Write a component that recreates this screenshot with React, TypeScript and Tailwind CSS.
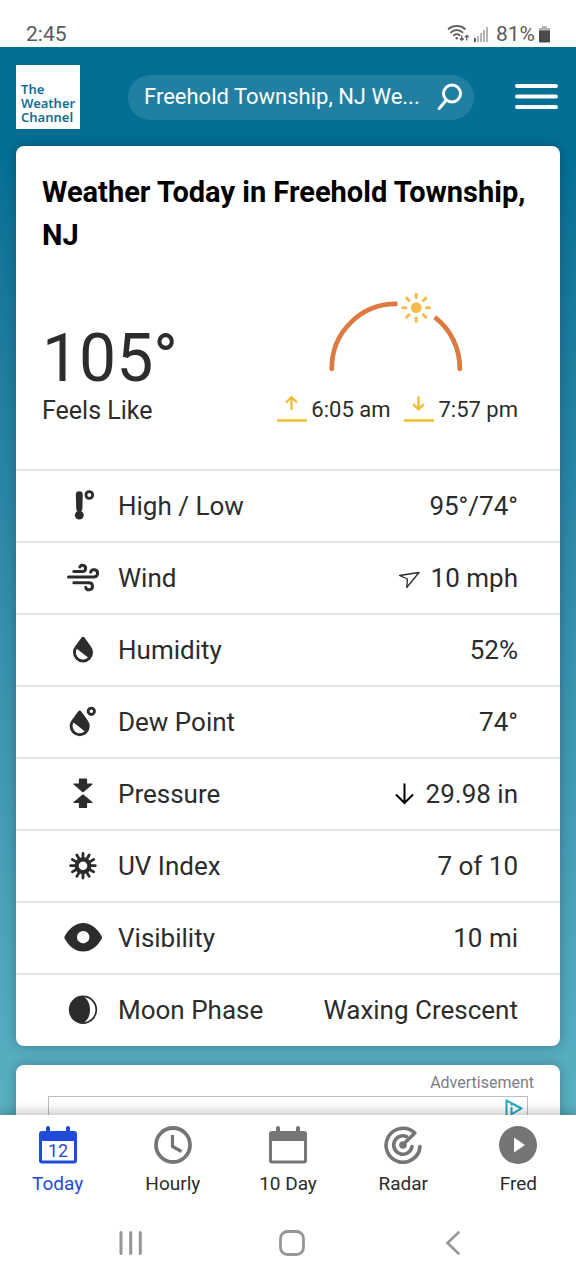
import type { ReactNode } from "react";

const Icon = ({ children }: { children: ReactNode }) => (
  <svg viewBox="0 0 44 44" className="h-11 w-11" fill="currentColor" aria-hidden="true">{children}</svg>
);

const dropPath =
  "M22 8.8c.7 0 1.2.4 1.6 1C27.5 15.6 32 19.5 32 24.5a10 10 0 0 1-20 0C12 19.5 16.5 15.6 20.4 9.8c.4-.6.9-1 1.6-1ZM27 29.5L15.8 20.7a7.2 7.2 0 0 0 11.2 8.8Z";

const rays = (count: number) => Array.from({ length: count }, (_, i) => (i * 360) / count);

const HighLow = () => (
  <Icon>
    <path d="M14.8 10.8a3.5 3.5 0 0 1 7 0L21.4 24.5q0 2-1.6 2.7V28.5H16.8V27.2q-1.6-.7-1.6-2.7Z" />
    <circle cx="18.3" cy="31.2" r="4.4" />
    <circle cx="28.3" cy="11" r="3.4" fill="none" stroke="currentColor" strokeWidth="2.8" />
  </Icon>
);

const Wind = () => (
  <Icon>
    <g fill="none" stroke="currentColor" strokeWidth="3" strokeLinecap="round">
      <path d="M12.8 15.5H21.5a3.1 3.1 0 1 0-2.7-4.6" />
      <path d="M7.5 20.9H33a3.6 3.6 0 1 0-3.4-4.8" />
      <path d="M12.8 26.7H28a3.5 3.5 0 1 1-3.3 4.7" />
    </g>
  </Icon>
);

const Humidity = () => (
  <Icon>
    <path fillRule="evenodd" d={dropPath} />
  </Icon>
);

const DewPoint = () => (
  <Icon>
    <path fillRule="evenodd" transform="translate(-3.3 1.7)" d={dropPath} />
    <circle cx="30.3" cy="11.3" r="3.2" fill="none" stroke="currentColor" strokeWidth="2.8" />
  </Icon>
);

const Pressure = () => (
  <Icon>
    <g stroke="currentColor" strokeWidth="1.2" strokeLinejoin="round">
      <path d="M18.5 7H25.5V12H31L22 19.7L13 12H18.5Z" />
      <path d="M18.5 35.5H25.5V30.5H31L22 22.9L13 30.5H18.5Z" />
    </g>
  </Icon>
);

const UvIndex = () => (
  <Icon>
    <circle cx="22" cy="21.7" r="6.4" fill="none" stroke="currentColor" strokeWidth="4.2" />
    {rays(12).map(a => (
      <path key={a} d="M22 14V9.4" stroke="currentColor" strokeWidth="2.8" strokeLinecap="round" transform={`rotate(${a} 22 21.7)`} />
    ))}
  </Icon>
);

const Visibility = () => (
  <Icon>
    <path fillRule="evenodd" d="M3.6 20.5C8 12.5 14.5 7 22.2 7S36.4 12.5 40.8 20.5q.5 1 0 2C36.4 30.5 29.9 35.6 22.2 35.6S8 30.5 3.6 22.5q-.5-1 0-2ZM22.2 15a6.2 6.2 0 1 0 0 12.4a6.2 6.2 0 1 0 0-12.4Z" />
  </Icon>
);

const Moon = () => (
  <Icon>
    <circle cx="22" cy="21.7" r="13.3" fill="none" stroke="currentColor" strokeWidth="1.8" />
    <path d="M22 8.4a13.3 13.3 0 0 0 0 26.6C26.8 32.5 29 27.5 29 21.7S26.8 10.9 22 8.4Z" />
  </Icon>
);

const WindArrow = () => (
  <svg viewBox="0 0 24 24" className="h-6 w-6" fill="none" stroke="currentColor" strokeWidth="1.3" strokeLinejoin="round" aria-hidden="true">
    <path d="M3.5 9.5L23 6.5L10.7 21.5L11.5 13Z" />
  </svg>
);

const PressureArrow = () => (
  <svg viewBox="0 0 20 24" className="h-6 w-5 text-black" fill="none" stroke="currentColor" strokeWidth="2" aria-hidden="true">
    <path d="M9.500 1.5V21M1 12.5L9.500 21L18 12.5" />
  </svg>
);

const details = [
  { label: "High / Low", value: "95°/74°", icon: <HighLow /> },
  { label: "Wind", value: "10 mph", icon: <Wind />, mark: <WindArrow /> },
  { label: "Humidity", value: "52%", icon: <Humidity /> },
  { label: "Dew Point", value: "74°", icon: <DewPoint /> },
  { label: "Pressure", value: "29.98 in", icon: <Pressure />, mark: <PressureArrow /> },
  { label: "UV Index", value: "7 of 10", icon: <UvIndex /> },
  { label: "Visibility", value: "10 mi", icon: <Visibility /> },
  { label: "Moon Phase", value: "Waxing Crescent", icon: <Moon /> },
];

function StatusBar() {
  return (
    <div className="flex h-[47px] items-end justify-between bg-white px-[26px] text-[21px] leading-[26px] text-[#5a5a5a]">
      <span>2:45</span>
      <div className="flex items-center gap-1">
        <svg viewBox="0 0 42 20" className="h-5 w-[42px]" fill="none" aria-hidden="true">
          <g stroke="#5a5a5a" strokeWidth="1.7" strokeLinecap="round">
            <path d="M2.5 5a12.5 12.5 0 0 1 16.5 0M5 8.3a8.5 8.5 0 0 1 11.5 0M7.7 11.4a4.7 4.7 0 0 1 6 0" />
            <path strokeWidth="1.3" d="M15.8 12V16M14.2 14.8L15.8 16.4L17.4 14.8M20.8 16V11.5M19.2 12.9L20.8 11.3L22.4 12.9" />
          </g>
          <circle cx="10.7" cy="14.2" r="1.2" fill="#5a5a5a" />
          <path d="M28 14h2v4h-2z" fill="#5a5a5a" />
          <path d="M31 12h2V18h-2zM34 9h2v9h-2zM37 6h2v12h-2zM40 3h2v15h-2z" fill="#b5b5b5" />
        </svg>
        <span className="pl-1">81%</span>
        <svg viewBox="0 0 11 18" className="h-[18px] w-[11px]" aria-hidden="true">
          <path d="M3 1H8V3H11V6H0V3H3Z" fill="#b5b5b5" />
          <path d="M0 5.5H11V16.5a1 1 0 0 1-1 1H1a1 1 0 0 1-1-1Z" fill="#4a4a4a" />
        </svg>
      </div>
    </div>
  );
}

function Header() {
  return (
    <header className="flex items-center pt-[18px] pr-[18px] pb-[17px] pl-4">
      <a href="#" className="flex h-16 w-16 shrink-0 flex-col justify-end bg-white pb-[5px] pl-[5px] font-['Noto_Sans',sans-serif] text-[13px] leading-[14px] font-semibold text-[#136f96]">
        <span>The</span>
        <span>Weather</span>
        <span>Channel</span>
      </a>
      <form className="ml-12 flex h-[45px] min-w-0 flex-1 items-center rounded-full bg-white/12 pr-3 pl-4 text-white">
        <input
          type="text"
          aria-label="Search city or zip code"
          defaultValue="Freehold Township, NJ We..."
          className="min-w-0 flex-1 bg-transparent text-[22px] leading-7 outline-none"
        />
        <button type="button" aria-label="Search" className="shrink-0">
          <svg viewBox="0 0 25 28" className="h-7 w-[25px]" fill="none" stroke="currentColor" strokeWidth="3" strokeLinecap="round" aria-hidden="true">
            <circle cx="15" cy="10.5" r="8.5" />
            <path d="M9 17.5L2.2 25.5" />
          </svg>
        </button>
      </form>
      <button type="button" aria-label="Menu" className="ml-[41px] shrink-0 text-white">
        <svg viewBox="0 0 43 26" className="h-[26px] w-[43px]" stroke="currentColor" strokeWidth="4" strokeLinecap="round" aria-hidden="true">
          <path d="M2 2H41M2 12.5H41M2 23H41" />
        </svg>
      </button>
    </header>
  );
}

function SunTimes() {
  return (
    <div className="flex flex-col items-center">
      <svg viewBox="0 0 144 84" className="h-[84px] w-36" fill="none" strokeLinecap="round" aria-hidden="true">
        <path d="M5.8 77.5A64 64 0 0 1 71.5 13" stroke="#dc7b41" strokeWidth="4.7" strokeLinecap="butt" />
        <path d="M108.7 26.2A64 64 0 0 1 133.8 77.5" stroke="#dc7b41" strokeWidth="4.7" strokeLinecap="butt" />
        <path d="M5.8 77V78M133.8 77V78" stroke="#dc7b41" strokeWidth="4.7" />
        <circle cx="90.2" cy="16.7" r="5.4" fill="#f2bc49" />
        {rays(8).map(a => (
          <path key={a} d="M90.2 6.5V3.2" stroke="#f2bc49" strokeWidth="3" transform={`rotate(${a} 90.2 16.7)`} />
        ))}
      </svg>
      <div className="mt-[21px] flex items-center pb-px text-[22px] leading-7">
        <svg viewBox="0 0 30 28" className="mr-1 h-7 w-[30px]" fill="none" stroke="#eebd2f" strokeWidth="2.3" role="img" aria-label="Sunrise">
          <path d="M14.5 14V1.5M9 6.5L14.5 1.2L20 6.5M0 24.5H30" />
        </svg>
        <span>6:05 am</span>
        <svg viewBox="0 0 30 28" className="mr-1 ml-[14px] h-7 w-[30px]" fill="none" stroke="#eebd2f" strokeWidth="2.3" role="img" aria-label="Sunset">
          <path d="M14.5 .5V13M9 8L14.5 13.3L20 8M0 24.5H30" />
        </svg>
        <span>7:57 pm</span>
      </div>
    </div>
  );
}

function TodayCard() {
  return (
    <section className="mx-4 rounded-lg bg-white pb-px shadow-[0_0_12px_rgba(0,0,0,0.25)]">
      <h1 className="px-[26px] pt-[25px] text-[29px] leading-[43px] font-bold text-black">Weather Today in Freehold Township, NJ</h1>
      <div className="flex items-end justify-between pt-[34px] pr-[42px] pb-11 pl-[26px]">
        <div>
          <p className="text-[66px] leading-[76px]">105°</p>
          <p className="text-[25px] leading-7">Feels Like</p>
        </div>
        <SunTimes />
      </div>
      <dl>
        {details.map(({ label, value, icon, mark }) => (
          <div key={label} className="flex h-[72px] items-center border-t-2 border-[#e2e2e2] pr-[42px] pl-[45px] text-[26px] leading-8">
            <dt className="flex items-center gap-[13px]">{icon}{label}</dt>
            <dd className="ml-auto flex items-center gap-[11px]">{mark}{value}</dd>
          </div>
        ))}
      </dl>
    </section>
  );
}

function AdCard() {
  return (
    <aside className="mx-4 mt-[19px] flex flex-1 flex-col rounded-t-lg bg-white px-8 pt-[9px] shadow-[0_0_12px_rgba(0,0,0,0.25)]">
      <p className="-mr-1.5 self-end text-[16px] leading-[18px] text-[#7c7c88]">Advertisement</p>
      <div className="mt-1 flex flex-1 justify-end border border-b-0 border-[#bdbdbd] pt-0.5 pr-1">
        <svg viewBox="0 0 18 16" className="h-4 w-[18px]" fill="none" stroke="#22a9c4" strokeWidth="2" strokeLinejoin="round" aria-hidden="true">
          <path d="M1.5 17V1.5L16.5 9.5L6 15.5" />
          <path d="M6.5 8V17M6.5 5V6.5" />
        </svg>
      </div>
    </aside>
  );
}

const Calendar = () => (
  <path
    fillRule="evenodd"
    d="M7 2a2 2 0 0 1 4 0V5H27V2a2 2 0 0 1 4 0V5H35a3 3 0 0 1 3 3V34.5a3 3 0 0 1-3 3H3a3 3 0 0 1-3-3V8a3 3 0 0 1 3-3H7ZM3 15V34.5H35V15Z"
  />
);

const tabs = [
  {
    label: "Today",
    active: true,
    icon: (
      <>
        <Calendar />
        <text x="19" y="31" textAnchor="middle" fontSize="18">12</text>
      </>
    ),
  },
  {
    label: "Hourly",
    icon: (
      <g fill="none" stroke="currentColor" strokeWidth="3.8">
        <circle cx="19" cy="19" r="17" />
        <path d="M18.5 9V20.5L27.5 25.5" strokeWidth="3.2" />
      </g>
    ),
  },
  { label: "10 Day", icon: <Calendar /> },
  {
    label: "Radar",
    icon: (
      <>
        <g fill="none" stroke="currentColor" strokeWidth="3.6" strokeLinecap="round" strokeLinejoin="round">
          <path d="M36 20.5A17 17 0 1 1 30.8 7L19 18.5" />
          <path d="M28 20.5A9.2 9.2 0 1 1 22.5 10.5" />
        </g>
        <circle cx="19" cy="19" r="3.8" />
      </>
    ),
  },
  {
    label: "Fred",
    icon: <path fillRule="evenodd" d="M19 0a19 19 0 1 0 0 38a19 19 0 1 0 0-38ZM15 11.5L26 19L15 26.5Z" />,
  },
];

function BottomNav() {
  return (
    <footer className="relative bg-white shadow-[0_0_14px_rgba(0,0,0,0.35)]">
      <nav className="grid h-[90px] grid-cols-5">
        {tabs.map(({ label, icon, active }) => (
          <a key={label} href="#" className={`flex flex-col items-center pt-[11px] text-[19px] leading-6 ${active ? "text-[#1f4bd8]" : "text-[#2c2c2c]"}`}>
            <svg viewBox="0 0 38 38" className={`h-[38px] w-[38px] ${active ? "" : "text-[#757575]"}`} fill="currentColor" aria-hidden="true">{icon}</svg>
            <span className="mt-2">{label}</span>
          </a>
        ))}
      </nav>
      <div className="grid h-[75px] grid-cols-3 place-items-center pr-[43px] pl-[50px] text-[#969696]">
        <button type="button" aria-label="Recent apps">
          <svg viewBox="0 0 26 26" className="h-[26px] w-[26px]" stroke="currentColor" strokeWidth="3" strokeLinecap="round">
            <path d="M3 2.5V23.5M12.7 2.5V23.5M22.3 2.5V23.5" />
          </svg>
        </button>
        <button type="button" aria-label="Home">
          <svg viewBox="0 0 26 26" className="h-[26px] w-[26px]" fill="none" stroke="currentColor" strokeWidth="2.8">
            <rect x="1.5" y="1.5" width="23" height="23" rx="7" />
          </svg>
        </button>
        <button type="button" aria-label="Back">
          <svg viewBox="0 0 26 26" className="h-[26px] w-[26px]" fill="none" stroke="currentColor" strokeWidth="2.6" strokeLinecap="round">
            <path d="M18.5 2.5L7.5 13L18.5 23.5" />
          </svg>
        </button>
      </div>
    </footer>
  );
}

export default function App() {
  return (
    <div className="flex min-h-screen flex-col overflow-x-hidden bg-white font-[Roboto,sans-serif] text-[#2c2c2c]">
      <StatusBar />
      <main className="flex flex-1 flex-col bg-linear-to-b from-[#036f95] from-10% to-[#5ab0c2]">
        <Header />
        <TodayCard />
        <AdCard />
      </main>
      <BottomNav />
    </div>
  );
}
